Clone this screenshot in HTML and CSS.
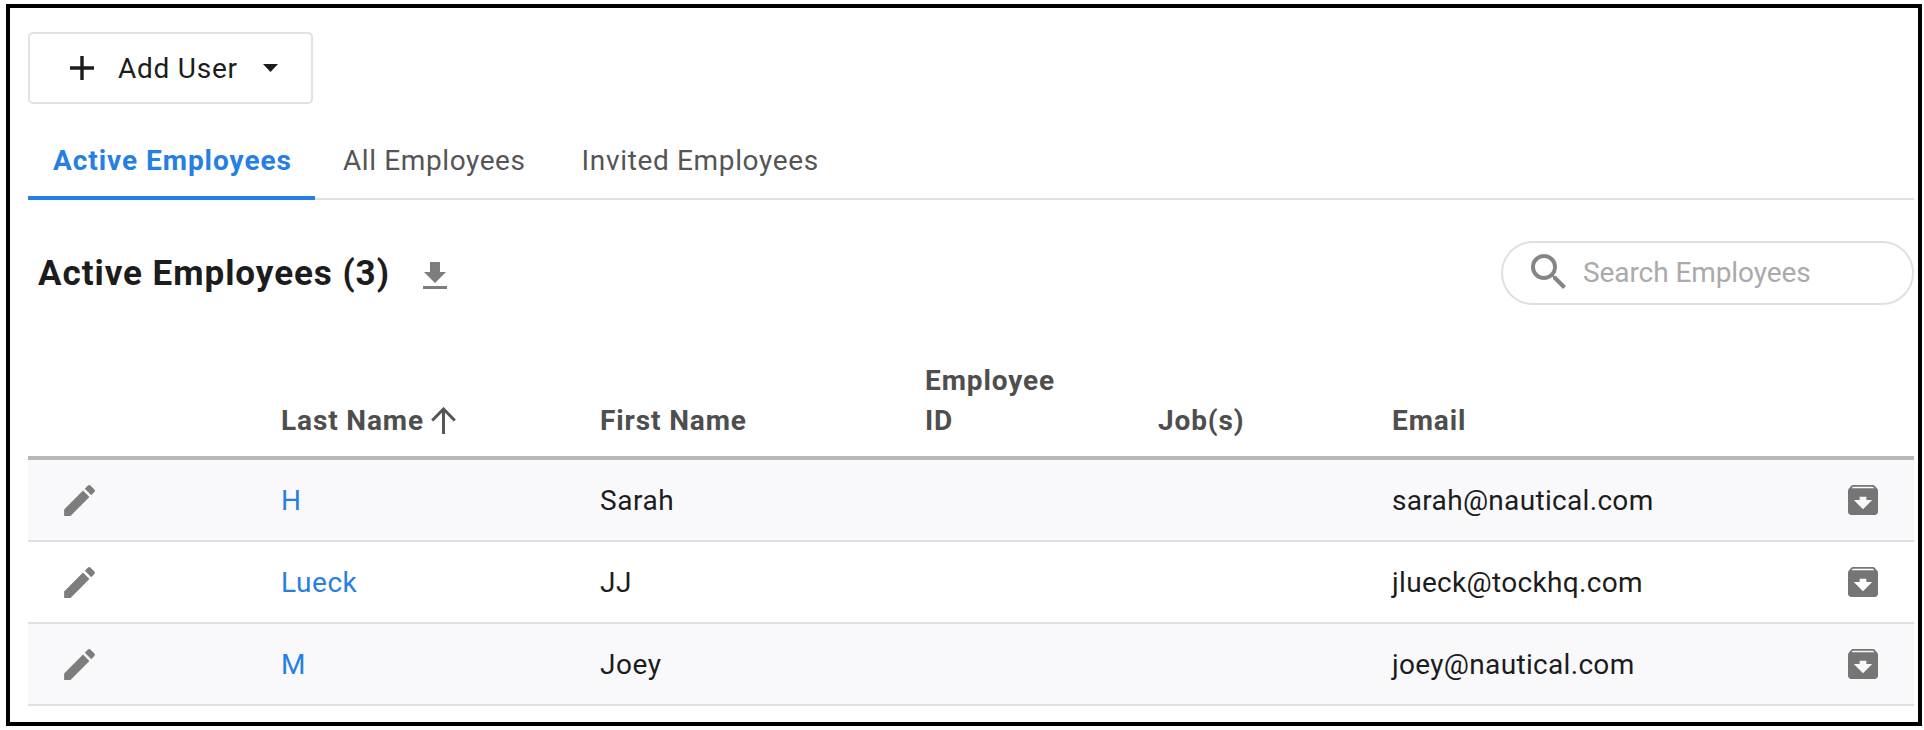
FILE: index.html
```html
<!DOCTYPE html>
<html lang="en">
<head>
<meta charset="utf-8">
<title>Employees</title>
<link rel="stylesheet" href="styles.css">
</head>
<body>
<svg width="0" height="0" class="sprite">
  <symbol id="pencil" viewBox="0 0 24 24"><path d="M3 17.25V21h3.75L17.81 9.94l-3.75-3.75L3 17.25zM20.71 7.04a1 1 0 0 0 0-1.41l-2.34-2.34a1 1 0 0 0-1.41 0l-1.83 1.83 3.75 3.75 1.83-1.83z"/></symbol>
  <symbol id="archive" viewBox="0 0 24 24"><path d="M20.54 5.23l-1.39-1.68C18.88 3.21 18.47 3 18 3H6c-.47 0-.88.21-1.16.55L3.46 5.23C3.17 5.57 3 6.02 3 6.5V19c0 1.1.9 2 2 2h14c1.1 0 2-.9 2-2V6.5c0-.48-.17-.93-.46-1.27zM12 17.5L6.5 12H10v-2h4v2h3.5L12 17.5zM5.12 5l.81-1h12l.94 1H5.12z"/></symbol>
</svg>
<main class="panel">
  <button class="add-user">
    <svg class="icon-plus" viewBox="0 0 24 24"><path d="M12 0v24M0 12h24"/></svg>
    <span>Add User</span>
    <svg class="icon-caret" viewBox="0 0 15 8"><path d="M0 0h15L7.500 8z"/></svg>
  </button>
  <nav class="tabs">
    <a class="tab tab-active">Active Employees</a>
    <a class="tab tab-all">All Employees</a>
    <a class="tab tab-invited">Invited Employees</a>
  </nav>
  <header class="toolbar">
    <h1 class="title">Active Employees (3)</h1>
    <svg class="icon-download" viewBox="0 0 24 27"><path d="M7 0h10v10h6L12 21 1 10h6zM0 24h24v3H0z"/></svg>
    <label class="search">
      <svg class="icon-search" viewBox="3 3 17.490 17.490"><path d="M15.500 14h-.79l-.28-.27A6.471 6.471 0 0 0 16 9.500 6.500 6.500 0 1 0 9.500 16c1.610 0 3.090-.59 4.230-1.570l.27.280v.79l5 4.990L20.490 19l-4.990-5zm-6 0C7.010 14 5 11.990 5 9.500S7.010 5 9.500 5 14 7.010 14 9.500 11.990 14 9.500 14z"/></svg>
      <span>Search Employees</span>
    </label>
  </header>
  <section class="table">
    <div class="row head">
      <span></span>
      <span class="sorted"><span class="last">Last Name</span><svg class="icon-sort" viewBox="0 0 25 27"><path d="M12.500 27V2M1.200 13.500L12.500 2l11.300 11.500"/></svg></span>
      <span class="first">First Name</span>
      <span class="empid">Employee<br>ID</span>
      <span class="jobs">Job(s)</span>
      <span class="email">Email</span>
      <span></span>
    </div>
    <div class="row shaded">
      <svg class="icon-edit"><use href="#pencil"/></svg>
      <a class="link">H</a><span>Sarah</span><span></span><span></span><span class="address">sarah@nautical.com</span>
      <svg class="icon-archive"><use href="#archive"/></svg>
    </div>
    <div class="row">
      <svg class="icon-edit"><use href="#pencil"/></svg>
      <a class="link">Lueck</a><span>JJ</span><span></span><span></span><span class="address">jlueck@tockhq.com</span>
      <svg class="icon-archive"><use href="#archive"/></svg>
    </div>
    <div class="row shaded">
      <svg class="icon-edit"><use href="#pencil"/></svg>
      <a class="link">M</a><span>Joey</span><span></span><span></span><span class="address">joey@nautical.com</span>
      <svg class="icon-archive"><use href="#archive"/></svg>
    </div>
  </section>
</main>
</body>
</html>
```

FILE: styles.css
```css
* { box-sizing: border-box; }
body { margin: 0; background: #fff; font-family: Roboto, "Liberation Sans", sans-serif; font-size: 28px; color: #1c1c1c; }
.sprite { display: block; }
.panel { margin: 4px 0 0 6px; width: 1916px; height: 722px; border: 4px solid #000; padding: 24px 4px 0 18px; display: flex; flex-direction: column; }
svg { display: block; flex: none; }
.add-user { width: 285px; height: 72px; flex: none; border: 2px solid #e2e2e2; border-radius: 5px; background: #fff; padding: 0 0 0 40px; display: flex; align-items: center; font: inherit; color: inherit; letter-spacing: 0.75px; }
.add-user span { margin: 0 25px 0 24px; }
.icon-plus { width: 24px; height: 24px; fill: none; stroke: #1c1c1c; stroke-width: 3.4; }
.icon-caret { width: 15px; height: 8px; fill: #1c1c1c; }
.tabs { height: 96px; flex: none; box-shadow: inset 0 -2px #e0e0e0; display: flex; color: #555; }
.tab { padding: 37px 0 0 28px; line-height: 40px; white-space: nowrap; letter-spacing: 0.6px; }
.tab-active { width: 287px; padding-left: 25px; font-weight: 700; color: #2680e3; border-bottom: 4px solid #2680e3; letter-spacing: 0.95px; }
.tab-invited { padding-left: 56px; letter-spacing: 0.65px; }
.toolbar { height: 145px; flex: none; display: flex; align-items: center; padding-left: 10px; }
.title { margin: 1px 0 0; font-size: 35px; font-weight: 700; white-space: nowrap; letter-spacing: 0.95px; }
.icon-download { width: 24px; height: 27px; margin: 6px 0 0 33px; fill: #7d7d7d; }
.search { width: 413px; height: 64px; margin-left: auto; border: 2px solid #e0e0e0; border-radius: 32px; padding-left: 28px; display: flex; align-items: center; color: #aaa; letter-spacing: -0.08px; }
.icon-search { width: 35px; height: 35px; fill: #858585; margin: -2px 17px 0 0; }
.table { display: flex; flex-direction: column; padding-top: 3px; }
.row { display: grid; grid-template-columns: 253px 319px 325px 233px 234px 450px 1fr; align-items: center; height: 82px; border-bottom: 2px solid #e0e0e0; white-space: nowrap; letter-spacing: 0.55px; }
.row.head { height: 112px; align-items: end; border-bottom: 4px solid #b8b8b8; color: #4e4e4e; font-weight: 700; line-height: 40px; padding-bottom: 15px; letter-spacing: 0.88px; }
.sorted { display: flex; align-items: center; }
.icon-sort { width: 25px; height: 27px; margin: -2px 0 0 7px; fill: none; stroke: #555; stroke-width: 3; }
.shaded { background: #f9f9fc; }
.link { color: #2680e3; }
.row .address { letter-spacing: 0.32px; }
.icon-edit { width: 41px; height: 41px; margin-left: 31px; fill: #7d7d7d; }
.icon-archive { width: 40px; height: 40px; margin-left: 1px; fill: #757575; }
```
